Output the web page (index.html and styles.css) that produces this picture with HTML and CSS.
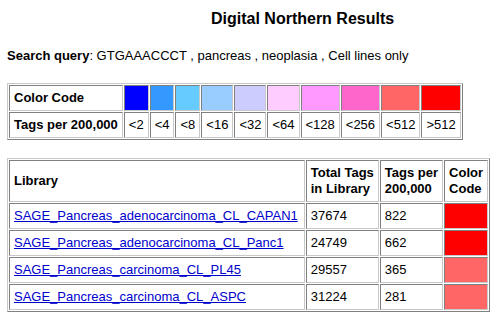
FILE: index.html
```html
<!DOCTYPE html>
<html>
<head>
<meta charset="utf-8">
<link rel="stylesheet" href="styles.css">
</head>
<body>
<div class="page">
  <h1 class="title">Digital Northern Results</h1>
  <p class="query"><b>Search query</b>: GTGAAACCCT , pancreas , neoplasia , Cell lines only</p>

  <table class="grid legend">
    <tr>
      <th>Color Code</th>
      <td class="c1"></td><td class="c2"></td><td class="c3"></td><td class="c4"></td><td class="c5"></td>
      <td class="c6"></td><td class="c7"></td><td class="c8"></td><td class="c9"></td><td class="c10"></td>
    </tr>
    <tr>
      <th>Tags per 200,000</th>
      <td>&lt;2</td><td>&lt;4</td><td>&lt;8</td><td>&lt;16</td><td>&lt;32</td>
      <td>&lt;64</td><td>&lt;128</td><td>&lt;256</td><td>&lt;512</td><td>&gt;512</td>
    </tr>
  </table>

  <table class="grid results">
    <tr>
      <th class="lib">Library</th>
      <th>Total Tags<br>in Library</th>
      <th>Tags per<br>200,000</th>
      <th>Color<br>Code</th>
    </tr>
    <tr>
      <td><a href="#">SAGE_Pancreas_adenocarcinoma_CL_CAPAN1</a></td>
      <td>37674</td><td>822</td><td class="c10"></td>
    </tr>
    <tr>
      <td><a href="#">SAGE_Pancreas_adenocarcinoma_CL_Panc1</a></td>
      <td>24749</td><td>662</td><td class="c10"></td>
    </tr>
    <tr>
      <td><a href="#">SAGE_Pancreas_carcinoma_CL_PL45</a></td>
      <td>29557</td><td>365</td><td class="c9"></td>
    </tr>
    <tr>
      <td><a href="#">SAGE_Pancreas_carcinoma_CL_ASPC</a></td>
      <td>31224</td><td>281</td><td class="c9"></td>
    </tr>
  </table>
</div>
</body>
</html>
```

FILE: styles.css
```css
html, body {
  margin: 0;
  padding: 0;
  background: #ffffff;
}

body {
  font-family: "Liberation Sans", Arial, sans-serif;
  font-size: 13px;
  color: #000000;
}

.page {
  padding: 0 7px;
}

.title {
  margin: 0;
  padding: 10px 0 0 204px;
  font-size: 16px;
  font-weight: bold;
  line-height: 18px;
}

.query {
  margin: 0;
  padding-top: 20px;
  line-height: 15px;
}

.grid {
  border-collapse: separate;
  border-spacing: 1px;
  border: 1px solid;
  border-color: #c8c8c8 #808080 #808080 #c8c8c8;
}

.grid th,
.grid td {
  padding: 4px;
  line-height: 16px;
  border: 1px solid;
  border-color: #808080 #c8c8c8 #c8c8c8 #808080;
  text-align: left;
  vertical-align: middle;
  white-space: nowrap;
}

.grid th {
  font-weight: bold;
}

.legend {
  margin-top: 20px;
}

.results {
  margin-top: 18px;
  width: 483px;
}

.results .lib {
  width: 100%;
}

.results a {
  color: #0000cc;
}

.c1 { background: #0000ff; }
.c2 { background: #3399ff; }
.c3 { background: #66ccff; }
.c4 { background: #99ccff; }
.c5 { background: #ccccff; }
.c6 { background: #ffccff; }
.c7 { background: #ff99ff; }
.c8 { background: #ff66cc; }
.c9 { background: #ff6666; }
.c10 { background: #ff0000; }
```
